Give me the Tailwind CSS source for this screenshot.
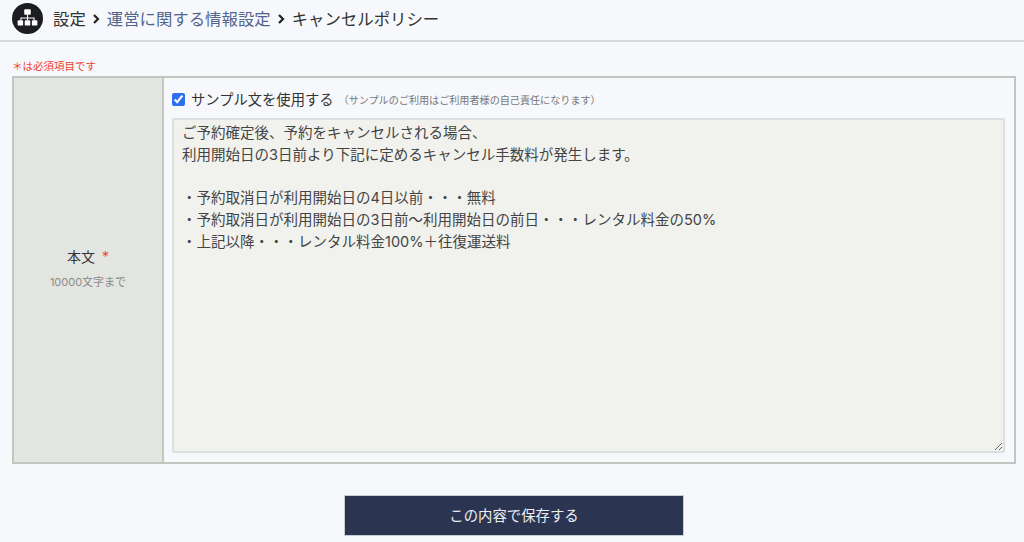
<!DOCTYPE html>
<html lang="ja">
<head>
    <meta charset="UTF-8">
    <meta name="viewport" content="width=device-width, initial-scale=1.0">
    <title>キャンセルポリシー</title>
    <script src="https://cdn.jsdelivr.net/npm/@tailwindcss/browser@4"></script>
</head>
<body class="h-[542px] overflow-hidden bg-[#f7f8fb] text-[#333] font-['Inter','Noto_Sans_CJK_JP',sans-serif]">
    <!-- breadcrumb -->
    <header class="flex h-[42px] items-center border-b-2 border-[#d8d9d9] pl-3 pb-[3px]">
        <div class="flex h-[31px] w-[31px] items-center justify-center rounded-full bg-[#1c1d22]">
            <svg class="h-[23px] w-[23px]" viewBox="0 0 21 21" fill="#fff">
                <rect x="7.5" y="2" width="6" height="5" rx="0.8"></rect>
                <path d="M10 7h1v2.5h6V12h-1v-1.5h-5V12h-1v-1.5H5V12H4V9.500h6z"></path>
                <rect x="1.500" y="12" width="5" height="5" rx="0.8"></rect>
                <rect x="8" y="12" width="5" height="5" rx="0.8"></rect>
                <rect x="14.500" y="12" width="5" height="5" rx="0.800"></rect>
            </svg>
        </div>
        <nav class="ml-[10px] flex items-center text-[16.4px] leading-6">
            <span>設定</span>
            <svg class="mx-[6px] h-[10px] w-[9px]" viewBox="0 0 9 10" fill="none" stroke="#222" stroke-width="2.2"><path d="M2 1l4 4-4 4"></path></svg>
            <a class="text-[#53658f]">運営に関する情報設定</a>
            <svg class="mx-[6px] h-[10px] w-[9px]" viewBox="0 0 9 10" fill="none" stroke="#222" stroke-width="2.2"><path d="M2 1l4 4-4 4"></path></svg>
            <span>キャンセルポリシー</span>
        </nav>
    </header>

    <main class="pr-2 pl-3">
        <p class="mt-[16px] h-[18px] text-[10.5px] leading-[18px] text-[#ef4136]">＊は必須項目です</p>

        <div class="flex h-[388px] border-2 border-[#c3c6bf]">
            <div class="flex w-[150px] shrink-0 flex-col items-center justify-center border-r-2 border-[#c3c6bf] bg-[#e3e5e0] pb-[4px]">
                <div class="text-[14px] leading-5">本文<span class="ml-[7px] text-[#ef4136]">*</span></div>
                <div class="mt-[7px] text-[11px] leading-4 text-[#8a8a8a]">10000文字まで</div>
            </div>
            <div class="flex min-w-0 flex-1 flex-col pt-[11px] pr-[9px] pl-[8px] pb-[9px]">
                <label class="flex h-[21px] items-center">
                    <input type="checkbox" checked class="h-[13px] w-[13px] accent-[#2f6fed]">
                    <span class="ml-[6px] text-[14.3px] leading-5">サンプル文を使用する</span>
                    <span class="ml-[5px] text-[10.1px] leading-5 text-[#777]">（サンプルのご利用はご利用者様の自己責任になります）</span>
                </label>
                <textarea readonly class="mt-[8px] min-h-0 w-full flex-1 rounded-[2px] border-2 border-[#dcdfe1] bg-[#f1f2ee] px-[8px] pt-[2px] pb-0 text-[14.5px] leading-[21.8px] text-[#444] outline-none">ご予約確定後、予約をキャンセルされる場合、
利用開始日の3日前より下記に定めるキャンセル手数料が発生します。

・予約取消日が利用開始日の4日以前・・・無料
・予約取消日が利用開始日の3日前～利用開始日の前日・・・レンタル料金の50%
・上記以降・・・レンタル料金100%＋往復運送料</textarea>
            </div>
        </div>

        <div class="mt-[31px] flex justify-center">
            <button class="h-[41px] w-[340px] border border-[#c9ccd6] bg-[#2b3551] text-[14.4px] text-[#eceef2]">この内容で保存する</button>
        </div>
    </main>
</body>
</html>
